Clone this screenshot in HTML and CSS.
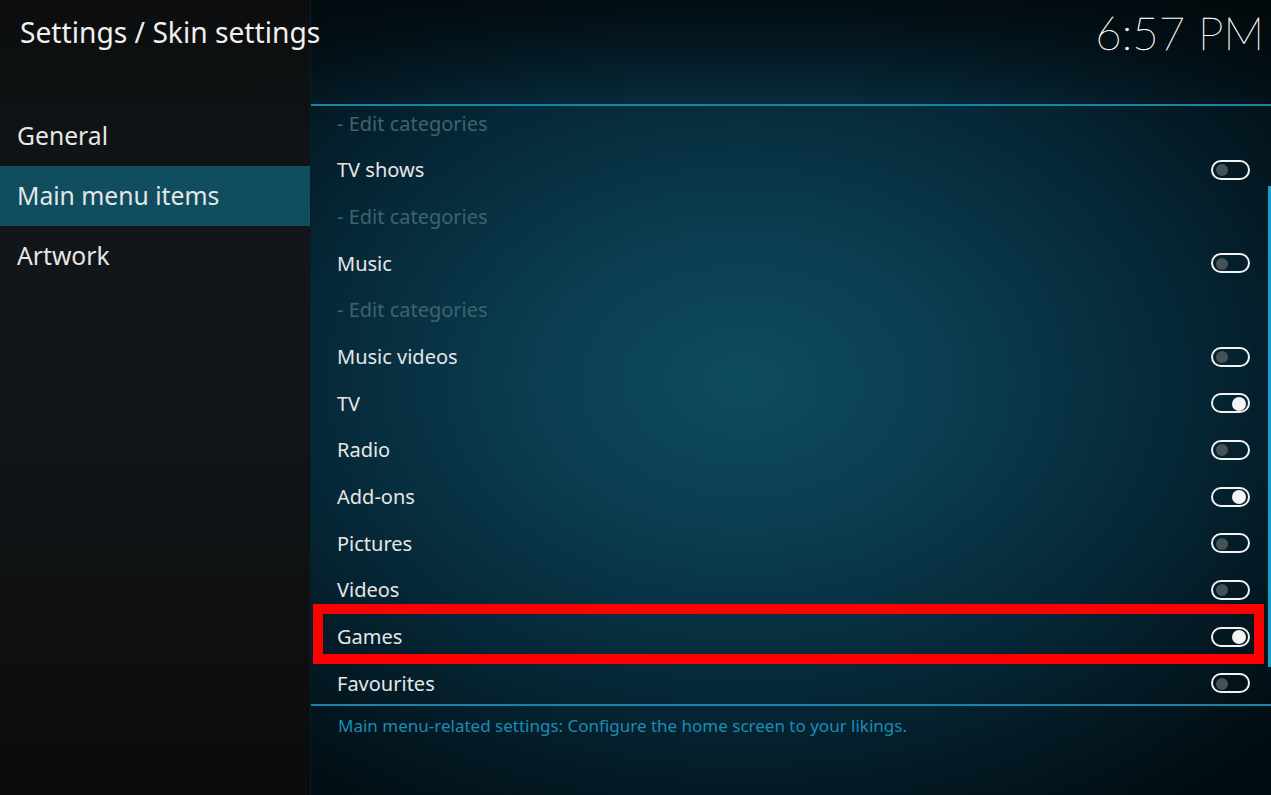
FILE: index.html
```html
<!DOCTYPE html>
<html lang="en">
<head>
  <meta charset="UTF-8" />
  <title>Settings / Skin settings</title>
  <link rel="stylesheet" href="styles.css">
</head>
<body>
  <div class="screen">
    <aside class="sidebar">
      <h1 class="page-title">Settings / Skin settings</h1>
      <ul class="categories">
        <li>General</li>
        <li class="active">Main menu items</li>
        <li>Artwork</li>
      </ul>
    </aside>

    <main class="panel">
      <div class="panel-top">
        <div class="clock">6:57 PM</div>
      </div>

      <div class="list-view">
        <ul class="settings">
          <li class="setting sub">- Edit categories</li>
          <li class="setting">TV shows <span class="toggle"></span></li>
          <li class="setting sub">- Edit categories</li>
          <li class="setting">Music <span class="toggle"></span></li>
          <li class="setting sub">- Edit categories</li>
          <li class="setting">Music videos <span class="toggle"></span></li>
          <li class="setting">TV <span class="toggle on"></span></li>
          <li class="setting">Radio <span class="toggle"></span></li>
          <li class="setting">Add-ons <span class="toggle on"></span></li>
          <li class="setting">Pictures <span class="toggle"></span></li>
          <li class="setting">Videos <span class="toggle"></span></li>
          <li class="setting marked">Games <span class="toggle on"></span><span class="mark"></span></li>
          <li class="setting">Favourites <span class="toggle"></span></li>
        </ul>
        <div class="scrollbar"></div>
      </div>

      <p class="hint">Main menu-related settings: Configure the home screen to your likings.</p>
    </main>
  </div>
</body>
</html>
```

FILE: styles.css
```css
* {
  box-sizing: border-box;
}
html, body {
  margin: 0;
  padding: 0;
  height: 100%;
  overflow: hidden;
}
body {
  font-family: 'Noto Sans', 'Open Sans', sans-serif;
  background: #0f1214;
  color: #e8e8e8;
}
.screen {
  display: flex;
  width: 1271px;
  height: 795px;
}
.sidebar {
  width: 310px;
  flex-shrink: 0;
  background: linear-gradient(to bottom, #0b0d0e 0%, #121618 25%, #111416 60%, #0a0b0c 100%);
  position: relative;
  z-index: 2;
}
.page-title {
  margin: 0;
  height: 106px;
  padding: 13px 0 0 20px;
  font-size: 28.2px;
  font-weight: 400;
  white-space: nowrap;
  color: #f0f0f0;
}
.categories {
  list-style: none;
  margin: 0;
  padding: 0;
}
.categories li {
  height: 60px;
  line-height: 60px;
  padding-left: 17px;
  font-size: 24.7px;
  color: #e6e6e6;
}
.categories li.active {
  background: #0f4d5f;
}
.panel {
  flex: 1;
  display: flex;
  flex-direction: column;
  border-left: 1px solid #06202a;
  background:
    radial-gradient(ellipse 75% 65% at 45% 48%, #0e4b5f 0%, #0a3d4f 30%, #062838 60%, #03161f 85%, #020d12 100%);
}
.panel-top {
  height: 106px;
  display: flex;
  justify-content: flex-end;
  padding: 5px 7px 0 0;
  border-bottom: 2px solid #1785a8;
  background: linear-gradient(to bottom, rgba(2, 8, 11, 0.75), rgba(2, 8, 11, 0));
}
.clock {
  font-family: 'Lato', 'Inter', sans-serif;
  font-weight: 100;
  font-size: 45.5px;
  color: #ffffff;
  -webkit-text-stroke: 0.4px #ffffff;
}
.list-view {
  position: relative;
  height: 600px;
  overflow: hidden;
  border-bottom: 2px solid #1785a8;
}
.settings {
  list-style: none;
  margin: -6px 0 0 0;
  padding: 0;
}
.setting {
  position: relative;
  height: 46.67px;
  display: flex;
  align-items: center;
  justify-content: space-between;
  padding: 0 21px 0 26px;
  font-size: 20px;
  color: #e6e6e6;
}
.setting.sub {
  color: #3c6470;
}
.toggle {
  position: relative;
  width: 39px;
  height: 20px;
  border: 2px solid #f2f2f2;
  border-radius: 10px;
}
.toggle::after {
  content: "";
  position: absolute;
  top: 2.5px;
  left: 3px;
  width: 12px;
  height: 12px;
  border-radius: 50%;
  background: #455258;
}
.toggle.on::after {
  left: auto;
  right: 2px;
  top: 1.5px;
  width: 14px;
  height: 14px;
  background: #f4f4f4;
}
.mark {
  position: absolute;
  top: -9px;
  bottom: -4px;
  left: 2px;
  right: 7px;
  border: 10px solid #ff0000;
}
.scrollbar {
  position: absolute;
  right: 0;
  top: 80px;
  width: 3px;
  height: 481px;
  background: #13a0cd;
}
.hint {
  margin: 0;
  padding: 8px 0 0 27px;
  font-size: 17px;
  color: #1c8cb4;
}
```
